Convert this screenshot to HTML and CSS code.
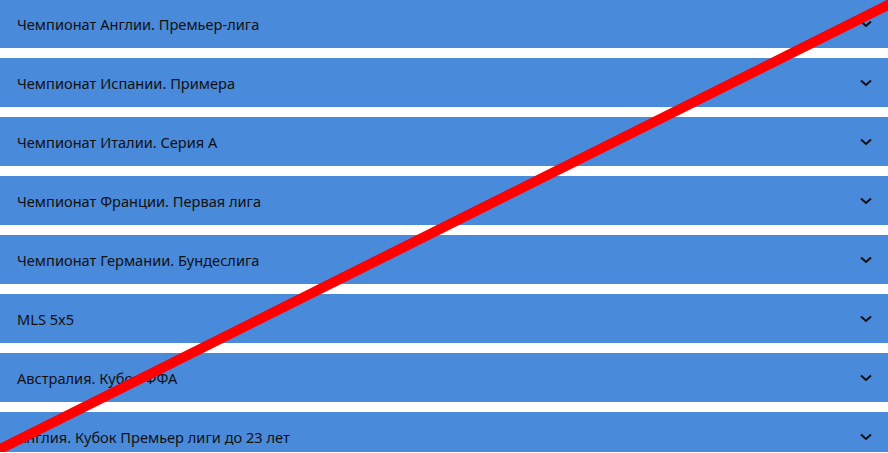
FILE: index.html
```html
<!DOCTYPE html>
<html lang="ru">
<head>
  <meta charset="UTF-8">
  <meta name="viewport" content="width=device-width, initial-scale=1.0">
  <title>Чемпионаты</title>
  <link rel="stylesheet" href="styles.css">
</head>
<body>
  <div class="page">
    <ul class="leagues">
      <li class="league">
        <span class="league-title">Чемпионат Англии. Премьер-лига</span>
        <svg class="chevron" width="12" height="8" viewBox="0 0 12 8"><path d="M1 1.5 L6 6 L11 1.5"/></svg>
      </li>
      <li class="league">
        <span class="league-title">Чемпионат Испании. Примера</span>
        <svg class="chevron" width="12" height="8" viewBox="0 0 12 8"><path d="M1 1.5 L6 6 L11 1.5"/></svg>
      </li>
      <li class="league">
        <span class="league-title">Чемпионат Италии. Серия А</span>
        <svg class="chevron" width="12" height="8" viewBox="0 0 12 8"><path d="M1 1.5 L6 6 L11 1.5"/></svg>
      </li>
      <li class="league">
        <span class="league-title">Чемпионат Франции. Первая лига</span>
        <svg class="chevron" width="12" height="8" viewBox="0 0 12 8"><path d="M1 1.5 L6 6 L11 1.5"/></svg>
      </li>
      <li class="league">
        <span class="league-title">Чемпионат Германии. Бундеслига</span>
        <svg class="chevron" width="12" height="8" viewBox="0 0 12 8"><path d="M1 1.5 L6 6 L11 1.5"/></svg>
      </li>
      <li class="league">
        <span class="league-title">MLS 5x5</span>
        <svg class="chevron" width="12" height="8" viewBox="0 0 12 8"><path d="M1 1.5 L6 6 L11 1.5"/></svg>
      </li>
      <li class="league">
        <span class="league-title">Австралия. Кубок ФФА</span>
        <svg class="chevron" width="12" height="8" viewBox="0 0 12 8"><path d="M1 1.5 L6 6 L11 1.5"/></svg>
      </li>
      <li class="league">
        <span class="league-title">Англия. Кубок Премьер лиги до 23 лет</span>
        <svg class="chevron" width="12" height="8" viewBox="0 0 12 8"><path d="M1 1.5 L6 6 L11 1.5"/></svg>
      </li>
    </ul>

    <svg class="cross" width="888" height="453">
      <line x1="-4" y1="452" x2="892" y2="4"/>
    </svg>
  </div>
</body>
</html>
```

FILE: styles.css
```css
html, body {
  margin: 0;
  padding: 0;
  background-color: #ffffff;
  overflow: hidden;
}

body {
  font-family: "Noto Sans", sans-serif;
}

.page {
  position: relative;
  height: 453px;
}

.leagues {
  list-style: none;
  margin: -1px 0 0;
  padding: 0;
}

.league {
  display: flex;
  align-items: center;
  justify-content: space-between;
  height: 49px;
  margin-bottom: 10px;
  padding: 0 16px 0 17px;
  background-color: #4a8adb;
  color: #111111;
  font-size: 14.6px;
  box-sizing: border-box;
}

.chevron {
  fill: none;
  stroke: #111111;
  stroke-width: 2;
}

.cross {
  position: absolute;
  top: 0;
  left: 0;
  pointer-events: none;
}

.cross line {
  stroke: #ff0000;
  stroke-width: 10;
}
```
